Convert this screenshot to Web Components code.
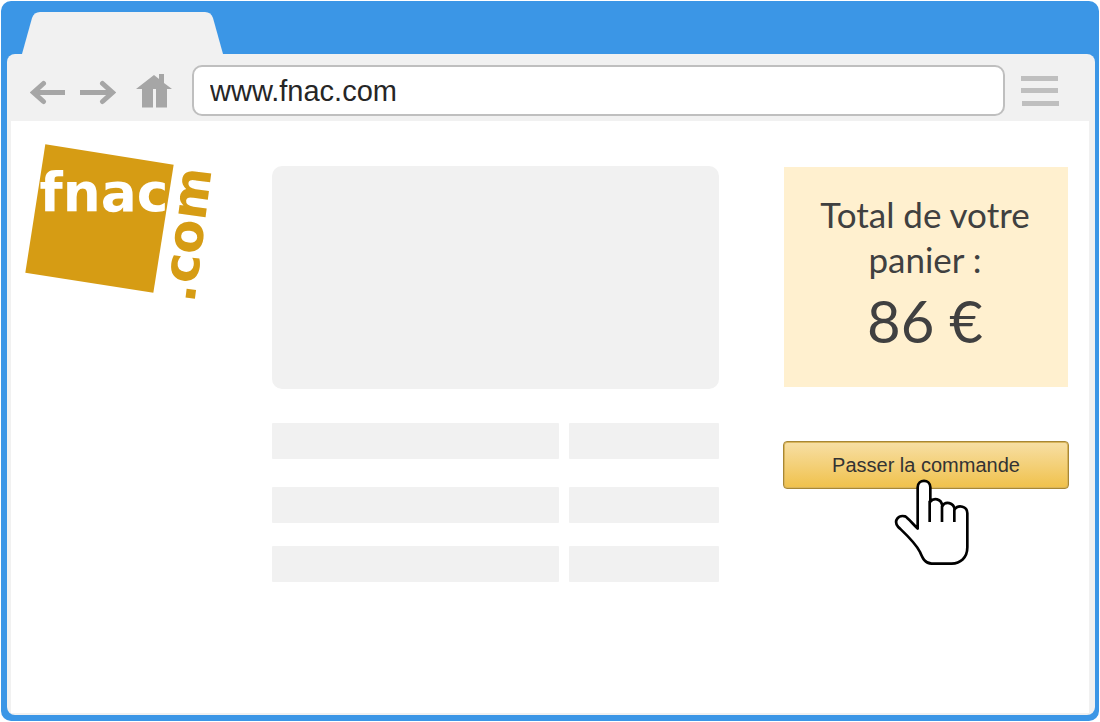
<!DOCTYPE html>
<html lang="fr">
<head>
<meta charset="utf-8">
<meta name="viewport" content="width=device-width, initial-scale=1">
<title>fnac.com</title>
<style>
  body { margin: 0; background: #fff; font-family: "Liberation Sans", Arial, sans-serif; }
</style>
</head>
<body>
<browser-window>
  <browser-toolbar slot="toolbar" url="www.fnac.com"></browser-toolbar>
  <shop-page>
    <fnac-logo slot="logo"></fnac-logo>
    <page-skeleton></page-skeleton>
    <cart-total slot="aside" amount="86 €">Total de votre panier :</cart-total>
    <order-button slot="aside">Passer la commande</order-button>
  </shop-page>
</browser-window>

<script>
const define = (name, html, setup) => {
  const template = document.createElement('template');
  template.innerHTML = '<style>*{box-sizing:border-box}</style>' + html;
  customElements.define(name, class extends HTMLElement {
    constructor() {
      super();
      this.attachShadow({ mode: 'open' }).append(template.content.cloneNode(true));
    }
    connectedCallback() { if (setup) setup(this, this.shadowRoot); }
  });
};

define('browser-window', `
  <style>
    :host { display: block; padding: 1px; }
    .frame { display: flex; flex-direction: column; min-height: calc(100vh - 2px);
             padding: 0 4px 6px 6px; background: #3b96e6; border-radius: 10px; }
    .tabs { display: flex; height: 53px; padding-left: 15px; align-items: flex-end; }
    .tabs svg { display: block; }
    .body { flex: 1; display: flex; flex-direction: column; background: #f1f1f1; border-radius: 8px; padding: 0 6px 2px 4px; }
    .view { flex: 1; background: #fff; }
  </style>
  <div class="frame">
    <div class="tabs">
      <svg width="201" height="42" viewBox="0 0 201 42" aria-hidden="true">
        <path d="M0 42 L10 6 Q12 0 18 0 H183 Q189 0 191 6 L201 42 Z" fill="#f1f1f1"/>
      </svg>
    </div>
    <div class="body">
      <slot name="toolbar"></slot>
      <main class="view"><slot></slot></main>
    </div>
  </div>`);

define('browser-toolbar', `
  <style>
    :host { display: block; }
    nav { display: flex; align-items: center; height: 67px; padding: 6px 30px 0 19px; }
    button { display: block; flex: none; border: 0; padding: 0; background: none; color: #a6a6a6; }
    svg { display: block; }
    .forward { margin-left: 15px; }
    .home { margin-left: 20px; }
    input { flex: 1; min-width: 0; height: 51px; margin: 0 16px 0 20px; padding: 2px 15px 0 16px; border: 2px solid #bfbfbf;
            border-radius: 10px; background: #fff; color: #262626; font: 29px "Liberation Sans", Arial, sans-serif; outline: 0; }
    .menu { color: #bfbfbf; }
  </style>
  <nav aria-label="Navigation">
    <button class="back" type="button" aria-label="Précédent">
      <svg width="35" height="34" viewBox="0 0 35 34" fill="none" stroke="currentColor" stroke-width="5">
        <path d="M35 18.500H4"/><path d="M13.500 9.500L3.500 18.500L13.500 27.500" stroke-linecap="round"/></svg>
    </button>
    <button class="forward" type="button" aria-label="Suivant">
      <svg width="36" height="34" viewBox="0 0 36 34" fill="none" stroke="currentColor" stroke-width="5">
        <path d="M0 18.500H32"/><path d="M22.500 9.500L32.500 18.500L22.500 27.500" stroke-linecap="round"/></svg>
    </button>
    <button class="home" type="button" aria-label="Accueil">
      <svg width="36" height="34" viewBox="0 0 36 34" fill="currentColor">
        <path d="M0 15L18 1L23 5V0H28V9L36 15H31V33.500H20V15H17V33.500H6V15Z"/></svg>
    </button>
    <input type="text" aria-label="Adresse">
    <button class="menu" type="button" aria-label="Menu">
      <svg width="38" height="30" viewBox="0 0 38 30" fill="currentColor">
        <path d="M0 0H37V5H0ZM0 12H37V17H0ZM1 25H38V30H1Z"/></svg>
    </button>
  </nav>`, (host, root) => { root.querySelector('input').value = host.getAttribute('url'); });

define('shop-page', `
  <style>
    :host { display: block; }
    .grid { display: grid; grid-template-columns: 183px minmax(0, 1fr) 286px; column-gap: 64px; align-items: start;
            padding: 22px 20px 40px 14px; }
    .content, .aside { padding-top: 23px; }
  </style>
  <div class="grid">
    <div><slot name="logo"></slot></div>
    <div class="content"><slot></slot></div>
    <div class="aside"><slot name="aside"></slot></div>
  </div>`);

define('fnac-logo', `
  <style>
    :host { display: block; }
    svg { display: block; overflow: visible; }
    text { font-family: "DejaVu Sans", sans-serif; font-weight: bold; }
  </style>
  <svg width="187" height="157" viewBox="45 38 561 471" role="img" aria-label="fnac.com">
    <polygon points="106,42 491,103 430,487 46,427" fill="#d69c14"/>
    <text x="282" y="242" font-size="160" text-anchor="middle" fill="#fff">fnac</text>
    <text font-size="150" fill="#d69c14" transform="translate(553 520) rotate(-82.600)">.com</text>
  </svg>`);

define('page-skeleton', `
  <style>
    :host { display: block; }
    .hero { height: 223px; border-radius: 10px; background: #f1f1f1; }
    .rows { display: grid; grid-template-rows: 64px 59px 36px; align-items: start; margin-top: 34px; }
    .row { display: grid; grid-template-columns: 287fr 150fr; gap: 10px; }
    .row i { height: 36px; border-radius: 1px; background: #f1f1f1; }
  </style>
  <div class="hero"></div>
  <div class="rows">
    <div class="row"><i></i><i></i></div>
    <div class="row"><i></i><i></i></div>
    <div class="row"><i></i><i></i></div>
  </div>`);

define('cart-total', `
  <style>
    :host { display: block; margin: 1px; }
    section { min-height: 220px; padding: 25px 32px 0 30px; background: #fff0cf; color: #404040; text-align: center;
              font-family: Lato, Calibri, sans-serif; }
    p { margin: 0; font-size: 35px; line-height: 45px; }
    .amount { font-size: 58px; line-height: 78px; }
  </style>
  <section>
    <p><slot></slot></p>
    <p class="amount"></p>
  </section>`, (host, root) => { root.querySelector('.amount').textContent = host.getAttribute('amount'); });

define('order-button', `
  <style>
    :host { display: block; position: relative; margin-top: 54px; }
    button { display: block; width: 100%; height: 48px; padding: 0; border: 1px solid #a88734; border-radius: 4px;
             background: linear-gradient(#f7dfa5, #f0c14b); box-shadow: inset 0 0 0 1px #d9b55c; color: #333;
             font: 20px "Liberation Sans", Arial, sans-serif; }
    .hand { position: absolute; left: 50%; top: 34px; margin-left: -36px; pointer-events: none; }
  </style>
  <button type="button"><slot></slot></button>
  <svg class="hand" width="85" height="95" viewBox="360 135 255 285" fill="#fff" stroke="#000" stroke-width="8" stroke-linejoin="round" aria-hidden="true">
    <path d="M443 296V172C443 146 481 146 481 172V215C490 203 514 204 517 228C526 213 551 217 554 238C565 223 592 228 592 250V352C592 385 570 400 545 401H485C465 401 458 385 450 366C436 338 410 315 384 290C370 272 385 254 405 259C412 262 425 278 443 296Z"/>
    <path d="M479 212V276M516 228V276M553 238V276" fill="none"/>
  </svg>`);
</script>
</body>
</html>
